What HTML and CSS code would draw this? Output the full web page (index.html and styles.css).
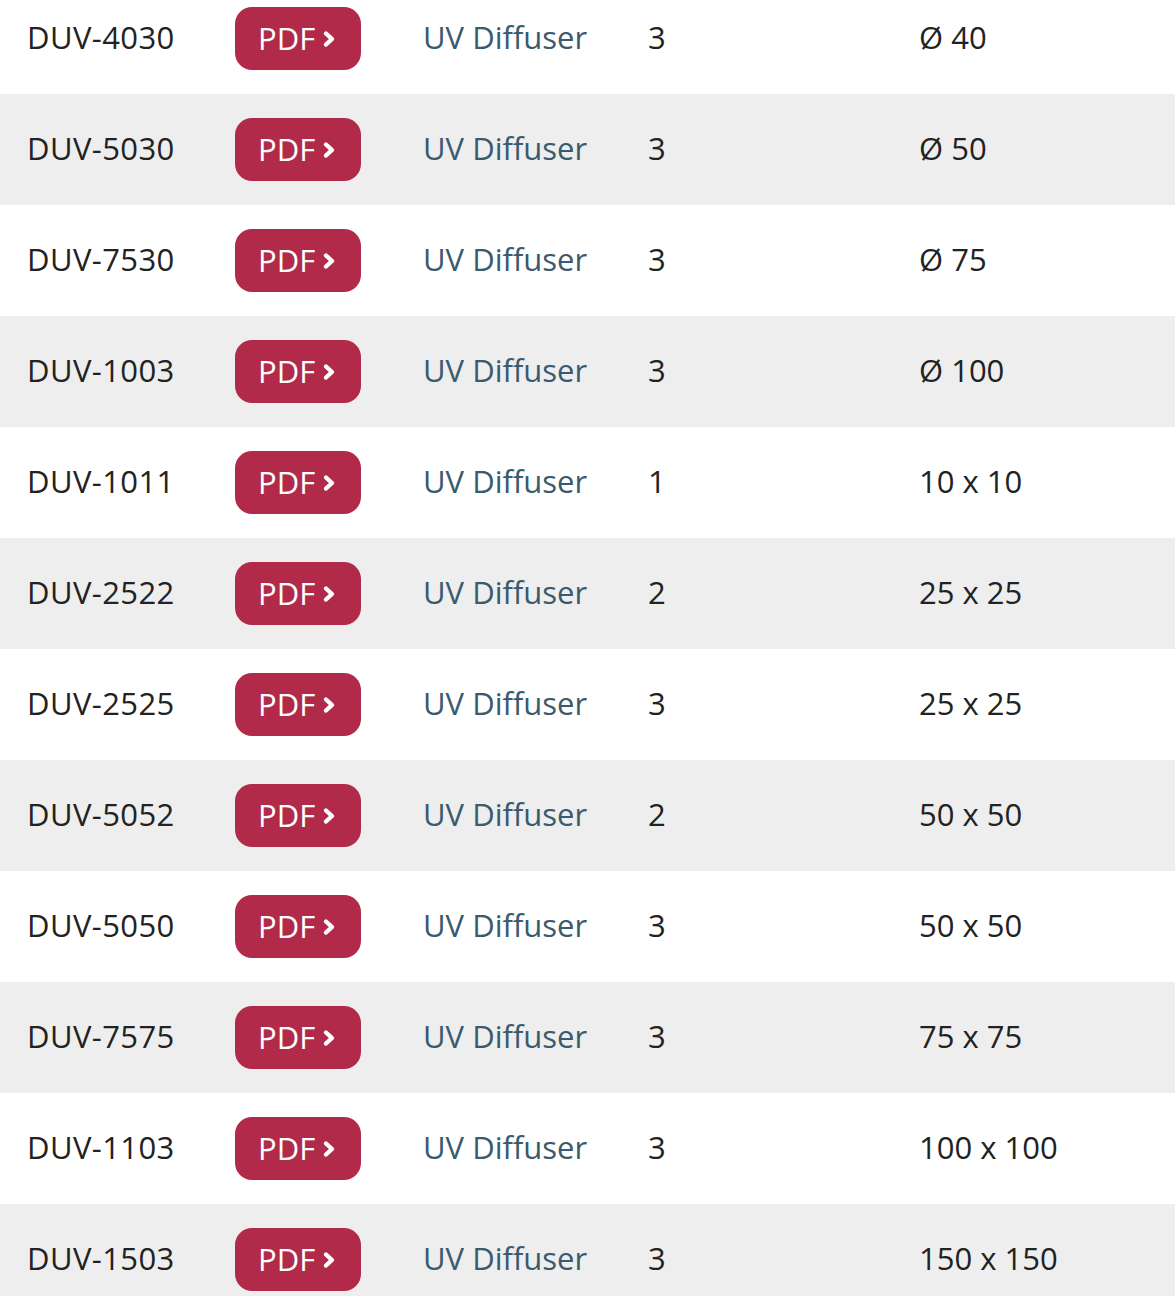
FILE: index.html
```html
<!DOCTYPE html>
<html>
<head>
<meta charset="utf-8">
<link rel="stylesheet" href="styles.css">
</head>
<body>
<div class="table">
  <div class="row"><div class="code">DUV-4030</div><div class="btn"><a class="pdf">PDF<svg class="chev" viewBox="0 0 14 18"><path d="M4 3.5 L10 9 L4 14.5"/></svg></a></div><div class="name">UV Diffuser</div><div class="num">3</div><div class="size">Ø 40</div></div>
  <div class="row"><div class="code">DUV-5030</div><div class="btn"><a class="pdf">PDF<svg class="chev" viewBox="0 0 14 18"><path d="M4 3.5 L10 9 L4 14.5"/></svg></a></div><div class="name">UV Diffuser</div><div class="num">3</div><div class="size">Ø 50</div></div>
  <div class="row"><div class="code">DUV-7530</div><div class="btn"><a class="pdf">PDF<svg class="chev" viewBox="0 0 14 18"><path d="M4 3.5 L10 9 L4 14.5"/></svg></a></div><div class="name">UV Diffuser</div><div class="num">3</div><div class="size">Ø 75</div></div>
  <div class="row"><div class="code">DUV-1003</div><div class="btn"><a class="pdf">PDF<svg class="chev" viewBox="0 0 14 18"><path d="M4 3.5 L10 9 L4 14.5"/></svg></a></div><div class="name">UV Diffuser</div><div class="num">3</div><div class="size">Ø 100</div></div>
  <div class="row"><div class="code">DUV-1011</div><div class="btn"><a class="pdf">PDF<svg class="chev" viewBox="0 0 14 18"><path d="M4 3.5 L10 9 L4 14.5"/></svg></a></div><div class="name">UV Diffuser</div><div class="num">1</div><div class="size">10 x 10</div></div>
  <div class="row"><div class="code">DUV-2522</div><div class="btn"><a class="pdf">PDF<svg class="chev" viewBox="0 0 14 18"><path d="M4 3.5 L10 9 L4 14.5"/></svg></a></div><div class="name">UV Diffuser</div><div class="num">2</div><div class="size">25 x 25</div></div>
  <div class="row"><div class="code">DUV-2525</div><div class="btn"><a class="pdf">PDF<svg class="chev" viewBox="0 0 14 18"><path d="M4 3.5 L10 9 L4 14.5"/></svg></a></div><div class="name">UV Diffuser</div><div class="num">3</div><div class="size">25 x 25</div></div>
  <div class="row"><div class="code">DUV-5052</div><div class="btn"><a class="pdf">PDF<svg class="chev" viewBox="0 0 14 18"><path d="M4 3.5 L10 9 L4 14.5"/></svg></a></div><div class="name">UV Diffuser</div><div class="num">2</div><div class="size">50 x 50</div></div>
  <div class="row"><div class="code">DUV-5050</div><div class="btn"><a class="pdf">PDF<svg class="chev" viewBox="0 0 14 18"><path d="M4 3.5 L10 9 L4 14.5"/></svg></a></div><div class="name">UV Diffuser</div><div class="num">3</div><div class="size">50 x 50</div></div>
  <div class="row"><div class="code">DUV-7575</div><div class="btn"><a class="pdf">PDF<svg class="chev" viewBox="0 0 14 18"><path d="M4 3.5 L10 9 L4 14.5"/></svg></a></div><div class="name">UV Diffuser</div><div class="num">3</div><div class="size">75 x 75</div></div>
  <div class="row"><div class="code">DUV-1103</div><div class="btn"><a class="pdf">PDF<svg class="chev" viewBox="0 0 14 18"><path d="M4 3.5 L10 9 L4 14.5"/></svg></a></div><div class="name">UV Diffuser</div><div class="num">3</div><div class="size">100 x 100</div></div>
  <div class="row"><div class="code">DUV-1503</div><div class="btn"><a class="pdf">PDF<svg class="chev" viewBox="0 0 14 18"><path d="M4 3.5 L10 9 L4 14.5"/></svg></a></div><div class="name">UV Diffuser</div><div class="num">3</div><div class="size">150 x 150</div></div>
</div>
</body>
</html>
```
FILE: styles.css
```css
html, body {
  margin: 0;
  padding: 0;
  background: #ffffff;
}
body {
  font-family: "Open Sans", "Noto Sans", sans-serif;
  font-size: 31px;
  color: #222222;
  overflow: hidden;
}
.table {
  margin-top: -17px;
}
.row {
  display: grid;
  grid-template-columns: 208px 188px 225px 271px 1fr;
  align-items: center;
  height: 111px;
  padding-left: 27px;
  background: #ffffff;
}
.row:nth-child(even) {
  background: #eeeeee;
}
.code, .name, .num, .size {
  padding-bottom: 4px;
}
.code {
  letter-spacing: 0.4px;
}
.name {
  color: #3b5a6d;
}
.pdf {
  display: inline-flex;
  align-items: center;
  box-sizing: border-box;
  width: 126px;
  height: 63px;
  padding-left: 23px;
  padding-bottom: 2px;
  border-radius: 17px;
  background: #b22a4a;
  color: #ffffff;
  text-decoration: none;
}
.chev {
  width: 14px;
  height: 18px;
  margin-left: 7px;
  margin-top: 2px;
}
.chev path {
  fill: none;
  stroke: #ffffff;
  stroke-width: 4.4;
  stroke-linecap: round;
  stroke-linejoin: round;
}
```
